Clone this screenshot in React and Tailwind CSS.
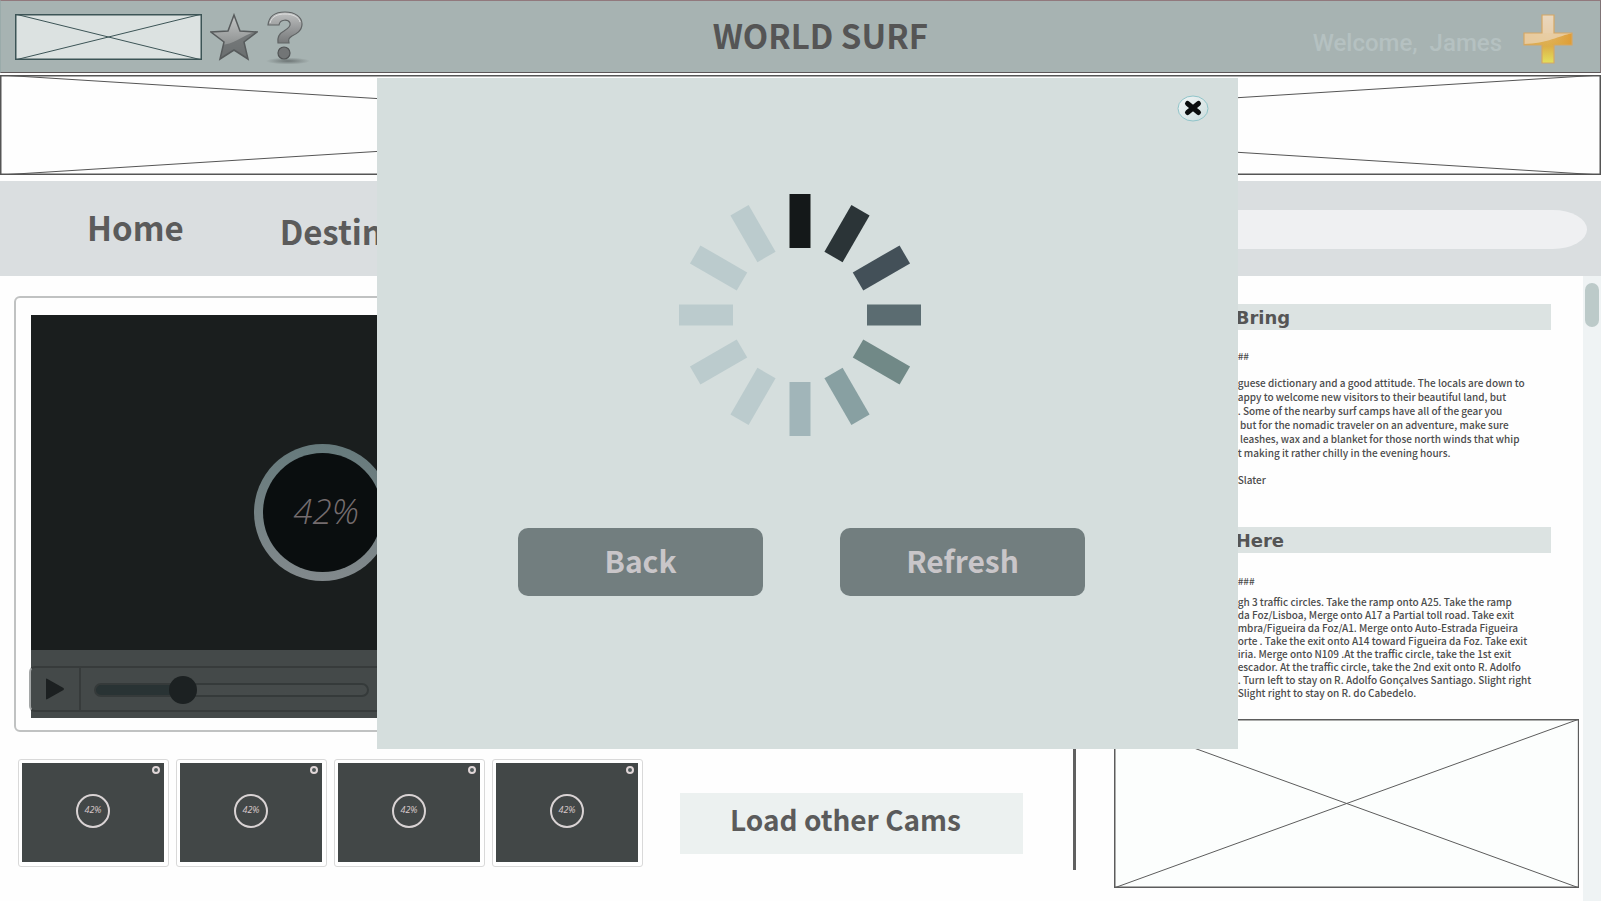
import React from "react";

const sans = "font-['Noto_Sans_CJK_SC','Open_Sans',sans-serif]";

const packing = [
  ["Pack a Portu", "guese dictionary and a good attitude. The locals are down to"],
  ["earth and h", "appy to welcome new visitors to their beautiful land, but"],
  ["bring your own", ". Some of the nearby surf camps have all of the gear you"],
  ["need,", " but for the nomadic traveler on an adventure, make sure"],
  ["to pack", " leashes, wax and a blanket for those north winds that whip"],
  ["in at nigh", "t making it rather chilly in the evening hours."],
  ["", ""],
  ["Kelly ", "Slater"],
];

const directions = [
  ["Drive throu", "gh 3 traffic circles. Take the ramp onto A25. Take the ramp"],
  ["to Figueira ", "da Foz/Lisboa, Merge onto A17 a Partial toll road. Take exit"],
  ["toward Coi", "mbra/Figueira da Foz/A1. Merge onto Auto-Estrada Figueira"],
  ["da Foz N", "orte . Take the exit onto A14 toward Figueira da Foz. Take exit"],
  ["toward Le", "iria. Merge onto N109 .At the traffic circle, take the 1st exit"],
  ["onto R. do P", "escador. At the traffic circle, take the 2nd exit onto R. Adolfo"],
  ["Santiago", ". Turn left to stay on R. Adolfo Gonçalves Santiago. Slight right"],
  ["at R. Nova. ", "Slight right to stay on R. do Cabedelo."],
];

const spokes = [
  "#141819", "#2b3437", "#435058", "#5b6c71", "#718987", "#88a0a2",
  "#a1b5b9", "#bbcbcd", "#bbcbcd", "#bbcbcd", "#bbcbcd", "#bbcbcd",
];

function Crossed({ className, stroke, fill }) {
  return (
    <svg className={className} viewBox="0 0 100 100" preserveAspectRatio="none" aria-hidden="true">
      <g stroke={stroke} fill="none">
        <rect x="0" y="0" width="100" height="100" fill={fill} strokeWidth="3" vectorEffect="non-scaling-stroke" />
        <path d="M0 0L100 100M0 100L100 0" vectorEffect="non-scaling-stroke" />
      </g>
    </svg>
  );
}

function Star() {
  return (
    <svg width="48" height="48" viewBox="0 0 48 48" aria-hidden="true">
      <defs>
        <linearGradient id="starFill" x1="0" y1="0" x2="0" y2="1">
          <stop offset="0" stopColor="#c4c6c6" />
          <stop offset="1" stopColor="#747878" />
        </linearGradient>
        <clipPath id="starClip">
          <path d="M24 2L30 18L47 19L34 29L38 46L24 37L10 46L14 29L1 19L18 18Z" />
        </clipPath>
      </defs>
      <path d="M24 2L30 18L47 19L34 29L38 46L24 37L10 46L14 29L1 19L18 18Z" fill="url(#starFill)" />
      <path d="M8 32C24 33 32 22 48 18V48H8Z" fill="#676b6c" opacity=".75" clipPath="url(#starClip)" />
      <path d="M24 2L30 18L47 19L34 29L38 46L24 37L10 46L14 29L1 19L18 18Z" fill="none" stroke="#575b5c" strokeWidth="1.5" />
    </svg>
  );
}

function Question() {
  return (
    <svg width="46" height="54" viewBox="0 0 46 54" aria-hidden="true">
      <defs>
        <linearGradient id="qFill" x1="0" y1="0" x2="0" y2="1">
          <stop offset="0" stopColor="#c0c2c2" />
          <stop offset=".5" stopColor="#9a9c9d" />
          <stop offset="1" stopColor="#77797a" />
        </linearGradient>
        <radialGradient id="qShadow">
          <stop offset="0" stopColor="#6c7474" />
          <stop offset="1" stopColor="#6c7474" stopOpacity="0" />
        </radialGradient>
      </defs>
      <ellipse cx="22" cy="50" rx="22" ry="3.500" fill="url(#qShadow)" />
      <path
        d="M2 14C3 5 10 1 19 1C29 1 36 6 36 13C36 20 30 23 26 25C23 27 22 28 23 32H12C11 25 14 22 18 20C23 17 25 15 24 12C22 8 14 8 13 14Z"
        fill="url(#qFill)" stroke="#606465" strokeWidth="1.2"
      />
      <path d="M4 12C6 5 12 3 19 3C27 3 33 6 34 11" fill="none" stroke="#dcdddd" strokeWidth="1" />
      <circle cx="18" cy="42" r="6" fill="#727576" stroke="#505354" strokeWidth="1.2" />
    </svg>
  );
}

function Plus() {
  return (
    <svg width="52" height="52" viewBox="0 0 52 52" aria-hidden="true">
      <defs>
        <linearGradient id="plusFill" x1="0" y1="0" x2="0" y2="1">
          <stop offset="0" stopColor="#e3cfae" />
          <stop offset=".5" stopColor="#e2b062" />
          <stop offset=".65" stopColor="#dcae48" />
          <stop offset="1" stopColor="#e3e05c" />
        </linearGradient>
        <linearGradient id="plusArm" x1="0" y1="0" x2="1" y2="0">
          <stop offset="0" stopColor="#dfa84f" />
          <stop offset=".5" stopColor="#dcae48" stopOpacity=".3" />
          <stop offset="1" stopColor="#e09c34" />
        </linearGradient>
        <clipPath id="plusClip">
          <path d="M20 2H32V20H50V32H32V50H20V32H2V20H20Z" />
        </clipPath>
      </defs>
      <path d="M20 2H32V20H50V32H32V50H20V32H2V20H20Z" fill="url(#plusFill)" />
      <g clipPath="url(#plusClip)">
        <rect x="2" y="20" width="48" height="12" fill="url(#plusArm)" />
        <path d="M0 0H52V20C38 22 26 31 0 31Z" fill="#ecdcc8" opacity=".65" />
      </g>
      <path d="M20 2H32V20H50V32H32V50H20V32H2V20H20Z" fill="none" stroke="#d5a765" strokeWidth="1.2" />
    </svg>
  );
}

function Notes({ lines, leading }) {
  return (
    <div className={`text-[10px] font-medium whitespace-pre text-[#4c4c4c] ${leading}`}>
      {lines.map(([lead, rest], i) => (
        <p key={i} className="flex min-h-[13px]">
          <span className="w-[124px] shrink-0 text-right">{lead}</span>
          <span>{rest}</span>
        </p>
      ))}
    </div>
  );
}

function SideHeading({ lead, word }) {
  return (
    <h2 className="mr-7 flex h-[26px] items-center bg-[#dce3e2] pt-[2px] font-['DejaVu_Sans',sans-serif] text-[18px] leading-6 font-bold whitespace-pre text-[#555]">
      <span className="flex w-[122px] justify-end">{lead}</span>
      <span>{word}</span>
    </h2>
  );
}

function CamThumb() {
  return (
    <li className="w-[151px] rounded-[3px] border border-[#d9d9d9] bg-white px-[3px] pt-[3px] pb-1">
      <div className="relative mr-px flex h-[99px] items-center justify-center bg-[#424747] pb-1">
        <div className="flex size-[34px] items-center justify-center rounded-full border-2 border-[#d9d3d4] pb-[2px] font-['Open_Sans',sans-serif] text-[9px] leading-none text-[#d9c9cb] italic">
          42%
        </div>
        <button aria-label="Remove cam" className="absolute top-[3px] right-1 size-2 rounded-full border-2 border-[#e0d6d7] bg-[#4e5959]" />
      </div>
    </li>
  );
}

export default function App() {
  return (
    <div className={`relative flex min-h-screen flex-col overflow-hidden bg-[#fefefe] ${sans}`}>
      <header className="flex h-[73px] items-center border border-t-[#91797d] border-r-[#7f7476] border-b-[#5c5758] border-l-[#9aabaa] bg-[#a7b3b2] pr-[26px] pl-[14px]">
        <Crossed className="h-[46px] w-[187px] overflow-hidden" stroke="#3c5456" fill="#dce2e1" />
        <button aria-label="Favourites" className="ml-2"><Star /></button>
        <button aria-label="Help" className="mt-[3px] ml-2"><Question /></button>
        <h1 className="flex-1 pb-1 pl-4 text-center text-[33px] leading-10 font-bold text-[#555]">WORLD SURF</h1>
        <p className="mt-3 font-['Roboto',sans-serif] text-[24px] leading-8 font-medium whitespace-pre text-[#b5c1c1]">Welcome,  James</p>
        <button aria-label="Add" className="mt-1 ml-5"><Plus /></button>
      </header>

      <Crossed className="mt-[2px] h-[100px] w-full overflow-hidden" stroke="#555" fill="#fefefe" />

      <nav className="mt-[6px] flex h-[95px] items-center bg-[#dadee0] pr-[14px] pl-[87px] text-[33px] leading-10 font-bold text-[#5b5b5b]">
        <a href="#home" className="pb-1">Home</a>
        <a href="#destinations" className="ml-[96px] pt-1">Destinations</a>
        <input aria-label="Search" className="mt-[2px] ml-auto h-[39px] w-[460px] rounded-[35px/20px] bg-[#eff0f2] px-8 text-base font-normal outline-none" />
      </nav>

      <main className="flex flex-1">
        <section className="w-[67%] pt-5 pl-[14px]">
          <div className="h-[436px] w-[616px] rounded-md border-2 border-[#c0c2c2] px-[15px] pt-[17px]">
            <div className="flex h-[403px] flex-col bg-[#1a1e1e]">
              <div className="flex flex-1 items-center justify-center pt-[60px]">
                <div className="rounded-full bg-linear-to-b from-[#667a7c] to-[#82898c] p-[9px]">
                  <div className="flex size-[119px] items-center justify-center rounded-full bg-[#0a0e0f] pb-1 pl-2 font-['Open_Sans',sans-serif] text-[35px] leading-10 font-light text-[#746c6e] italic">
                    42%
                  </div>
                </div>
              </div>
              <div className="h-[68px] bg-[#444949] pt-4">
                <div className="-ml-[2px] flex h-[46px] items-center rounded-md border-2 border-[#373b3b] border-l-[#a3a6a6]">
                  <button aria-label="Play" className="flex h-full w-[50px] items-center justify-center border-r-2 border-[#373b3b]">
                    <svg width="20" height="22" viewBox="0 0 20 22" aria-hidden="true">
                      <path d="M1 1.5Q1 0 2.500 1L18.500 10Q19.500 11 18.500 12L2.500 21Q1 22 1 20.500Z" fill="#1c2021" />
                    </svg>
                  </button>
                  <input
                    type="range"
                    aria-label="Position"
                    defaultValue={30}
                    className="mt-[2px] ml-[13px] h-[14px] w-[275px] appearance-none rounded-full border-2 border-[#353a3a] bg-linear-to-r from-[#293334] from-30% to-[#464b4b] to-30% [&::-webkit-slider-thumb]:size-7 [&::-webkit-slider-thumb]:appearance-none [&::-webkit-slider-thumb]:rounded-full [&::-webkit-slider-thumb]:bg-[#1c2122]"
                  />
                </div>
              </div>
            </div>
          </div>

          <div className="mt-[27px] flex items-center pl-1">
            <ul className="flex gap-[7px]">
              <CamThumb />
              <CamThumb />
              <CamThumb />
              <CamThumb />
            </ul>
            <button className="mt-5 ml-[37px] h-[61px] w-[343px] bg-[#ecf1f0] pr-3 pb-2 text-center text-[28px] leading-10 font-bold text-[#5b5b5b]">
              Load other Cams
            </button>
          </div>
        </section>

        <div className="mt-5 mb-[31px] w-[3px] bg-[#606060]" />

        <aside className="flex-1 pt-7 pr-1 pl-[38px]">
          <SideHeading lead="What to " word="Bring" />
          <div className="mt-[19px] mb-[13px]">
            <Notes lines={[["Posted ##/##/", "##"]]} leading="leading-[14px]" />
          </div>
          <Notes lines={packing} leading="leading-[14px]" />
          <div className="mt-10">
            <SideHeading lead="Getting " word="Here" />
          </div>
          <div className="mt-[21px] mb-[7px]">
            <Notes lines={[["Posted ##/##/", "###"]]} leading="leading-[14px]" />
          </div>
          <Notes lines={directions} leading="leading-[13px]" />
          <Crossed className="mt-5 h-[169px] w-full overflow-hidden" stroke="#5c5c5c" fill="#fcfefd" />
        </aside>

        <div className="w-[18px] bg-[#eff3f4] px-[2px] pt-[7px]">
          <div className="h-11 rounded-full bg-[#bccac9]" />
        </div>
      </main>

      <div role="dialog" aria-label="Loading" className="absolute top-[78px] right-[363px] left-[377px] min-h-[671px] bg-[#d5dedd] pt-[17px]">
        <div className="flex justify-end pr-[29px]">
          <button aria-label="Close">
            <svg width="32" height="27" viewBox="0 0 32 27" aria-hidden="true">
              <defs>
                <linearGradient id="closeFill" x1="0" y1="0" x2="1" y2="1">
                  <stop offset="0" stopColor="#f3f6f6" />
                  <stop offset="1" stopColor="#cbdcdd" />
                </linearGradient>
              </defs>
              <ellipse cx="16" cy="13.500" rx="15" ry="12.500" fill="url(#closeFill)" stroke="#90c4c9" />
              <path d="M10.500 8.500L21.500 17.500M21.500 8.500L10.500 17.500" stroke="#0b0d0e" strokeWidth="5" strokeLinecap="round" />
            </svg>
          </button>
        </div>
        <div className="mt-[71px] flex justify-center pr-4">
          <svg width="244" height="244" viewBox="-122 -122 244 244" role="img" aria-label="Loading">
            {spokes.map((color, i) => (
              <rect key={i} x="-10.500" y="-121" width="21" height="54" fill={color} transform={`rotate(${i * 30})`} />
            ))}
          </svg>
        </div>
        <div className="mt-[91px] flex justify-center gap-[77px] pr-[12px] text-[30px] leading-10 font-bold text-[#c9c6c9]">
          <button className="h-[68px] w-[245px] rounded-[10px] bg-[#727e7f] pb-1">Back</button>
          <button className="h-[68px] w-[245px] rounded-[10px] bg-[#727e7f] pb-1">Refresh</button>
        </div>
      </div>
    </div>
  );
}
